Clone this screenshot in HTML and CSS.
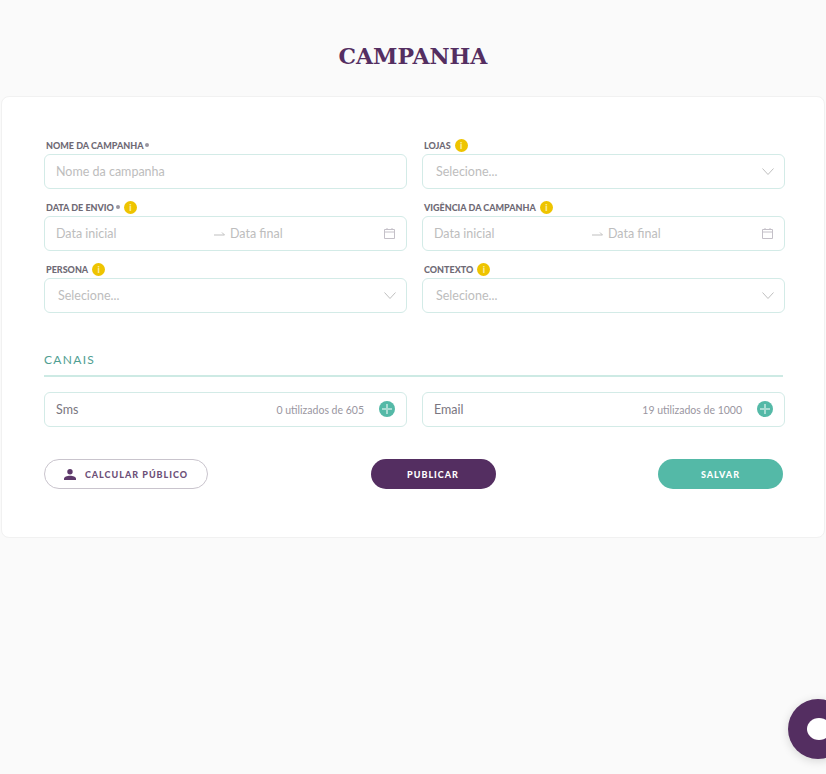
FILE: index.html
```html
<!DOCTYPE html>
<html>
<head>
    <meta charset="UTF-8">
    <title>Campanha</title>
    <link rel="stylesheet" href="styles.css">
</head>
<body>
    <h1 class="title">CAMPANHA</h1>
    <div class="card">
        <div class="form_grid">
            <div class="field">
                <div class="label">NOME DA CAMPANHA<i class="req"></i></div>
                <div class="input"><span class="ph">Nome da campanha</span></div>
            </div>
            <div class="field">
                <div class="label">LOJAS<span class="info">i</span></div>
                <div class="input select"><span class="ph">Selecione...</span>
                    <svg class="chevron" viewBox="0 0 12 7"><path d="M.5.5 6 6.5 11.500.5"/></svg>
                </div>
            </div>
            <div class="field">
                <div class="label">DATA DE ENVIO<i class="req"></i><span class="info">i</span></div>
                <div class="input range">
                    <span class="ph range_start">Data inicial</span>
                    <svg class="arrow" viewBox="0 0 11 5"><path d="M0 4H10.500L8 1.500"/></svg>
                    <span class="ph range_end">Data final</span>
                    <svg class="calendar" viewBox="0 0 11 11"><path d="M.5 1.500H10.500V10.500H.5ZM.5 4H10.500M3 0V2M8 0V2"/></svg>
                </div>
            </div>
            <div class="field">
                <div class="label">VIGÊNCIA DA CAMPANHA<span class="info">i</span></div>
                <div class="input range">
                    <span class="ph range_start">Data inicial</span>
                    <svg class="arrow" viewBox="0 0 11 5"><path d="M0 4H10.500L8 1.500"/></svg>
                    <span class="ph range_end">Data final</span>
                    <svg class="calendar" viewBox="0 0 11 11"><path d="M.5 1.500H10.500V10.500H.5ZM.5 4H10.500M3 0V2M8 0V2"/></svg>
                </div>
            </div>
            <div class="field">
                <div class="label">PERSONA<span class="info">i</span></div>
                <div class="input select"><span class="ph">Selecione...</span>
                    <svg class="chevron" viewBox="0 0 12 7"><path d="M.5.5 6 6.5 11.500.5"/></svg>
                </div>
            </div>
            <div class="field">
                <div class="label">CONTEXTO<span class="info">i</span></div>
                <div class="input select"><span class="ph">Selecione...</span>
                    <svg class="chevron" viewBox="0 0 12 7"><path d="M.5.5 6 6.5 11.500.5"/></svg>
                </div>
            </div>
        </div>

        <div class="section_title">CANAIS</div>
        <div class="channels">
            <div class="input channel">
                <span class="channel_name">Sms</span>
                <span class="usage">0 utilizados de 605</span>
                <span class="plus"></span>
            </div>
            <div class="input channel">
                <span class="channel_name">Email</span>
                <span class="usage">19 utilizados de 1000</span>
                <span class="plus"></span>
            </div>
        </div>

        <div class="actions">
            <a href="javascript:;" class="btn btn_outline">
                <svg class="user" viewBox="0 0 12 11"><circle cx="6" cy="2.700" r="2.700"/><path d="M0 11V9.500C0 7.800 3 6.700 6 6.700S12 7.800 12 9.500V11Z"/></svg>
                CALCULAR PÚBLICO
            </a>
            <a href="javascript:;" class="btn btn_purple">PUBLICAR</a>
            <a href="javascript:;" class="btn btn_green">SALVAR</a>
        </div>
    </div>
    <div class="chat"><span class="chat_dot"></span></div>
</body>
</html>
```

FILE: styles.css
```css
* {
    margin: 0;
    padding: 0;
    box-sizing: border-box;
}
html, body {
    height: 774px;
    overflow: hidden;
}
body {
    background-color: #fafafa;
    font-family: "Lato", "Liberation Sans", sans-serif;
    padding: 0 1px;
}
a {
    text-decoration: none;
}
.title {
    height: 96px;
    padding-top: 41px;
    text-align: center;
    font-family: "DejaVu Serif", serif;
    font-size: 22px;
    line-height: 30px;
    font-weight: bold;
    color: #542e61;
}
.card {
    height: 442px;
    padding: 40px 41px 0 42px;
    background-color: #fff;
    border: 1px solid #f1f1f1;
    border-radius: 8px;
}
.form_grid {
    display: grid;
    grid-template-columns: 363px 363px;
    column-gap: 15px;
    row-gap: 10px;
}
.label {
    display: flex;
    align-items: center;
    height: 16px;
    margin-bottom: 1px;
    padding-left: 2px;
    font-size: 9px;
    font-weight: 900;
    color: #6f6a75;
}
.req {
    width: 4px;
    height: 4px;
    margin-left: 2px;
    border-radius: 50%;
    background-color: #9a96a0;
}
.info {
    width: 13px;
    height: 13px;
    margin-left: 4px;
    border-radius: 50%;
    background-color: #eec400;
    color: #fbeea8;
    font-size: 9px;
    line-height: 13px;
    text-align: center;
}
.input {
    position: relative;
    display: flex;
    align-items: center;
    height: 35px;
    padding: 0 11px;
    border: 1px solid #d3ebe7;
    border-radius: 6px;
    background-color: #fff;
}
.ph {
    font-size: 12.500px;
    color: #bdbdbd;
}
.select {
    padding-left: 13px;
}
.chevron {
    width: 12px;
    height: 7px;
    margin-left: auto;
    margin-right: -1px;
    fill: none;
    stroke: #bfbfbf;
}
.range_start {
    width: 158px;
}
.arrow {
    width: 11px;
    height: 5px;
    margin-right: 5px;
    fill: none;
    stroke: #bfbfbf;
}
.calendar {
    width: 11px;
    height: 11px;
    margin-left: auto;
    fill: none;
    stroke: #c4c0c8;
}
.section_title {
    margin-top: 40px;
    height: 22px;
    border-bottom: 2px solid #cdeae4;
    box-sizing: content-box;
    font-size: 12px;
    line-height: 14px;
    letter-spacing: 1.300px;
    color: #4f9e92;
}
.channels {
    display: grid;
    grid-template-columns: 363px 363px;
    column-gap: 15px;
    margin-top: 15px;
}
.channel_name {
    font-size: 12.500px;
    color: #7a7680;
}
.usage {
    margin-left: auto;
    margin-right: 15px;
    font-size: 10.500px;
    color: #9a969f;
}
.plus {
    position: relative;
    width: 16px;
    height: 16px;
    margin-top: -2px;
    border-radius: 50%;
    background-color: #54b9a7;
}
.plus:before, .plus:after {
    content: "";
    position: absolute;
    background-color: #a9dcd3;
}
.plus:before {
    left: 3px;
    top: 7px;
    width: 10px;
    height: 2px;
}
.plus:after {
    left: 7px;
    top: 3px;
    width: 2px;
    height: 10px;
}
.actions {
    display: flex;
    justify-content: space-between;
    margin-top: 32px;
}
.btn {
    display: flex;
    align-items: center;
    justify-content: center;
    height: 30px;
    border-radius: 15px;
    font-size: 9px;
    font-weight: 900;
    letter-spacing: 1px;
}
.btn_outline {
    width: 164px;
    border: 1px solid #c9c4cd;
    color: #6d5078;
}
.user {
    width: 12px;
    height: 11px;
    margin-right: 9px;
    fill: #5e3a6b;
}
.btn_purple {
    width: 125px;
    background-color: #542e61;
    color: #fff;
}
.btn_green {
    width: 125px;
    background-color: #54b9a7;
    color: #fff;
}
.chat {
    position: fixed;
    left: 788px;
    top: 699px;
    width: 60px;
    height: 60px;
    border-radius: 50%;
    background-color: #542e61;
    box-shadow: 0 2px 10px rgba(0,0,0,0.15);
}
.chat_dot {
    position: absolute;
    left: 19px;
    top: 19px;
    width: 24px;
    height: 22px;
    border-radius: 50%;
    background-color: #fff;
}
```
